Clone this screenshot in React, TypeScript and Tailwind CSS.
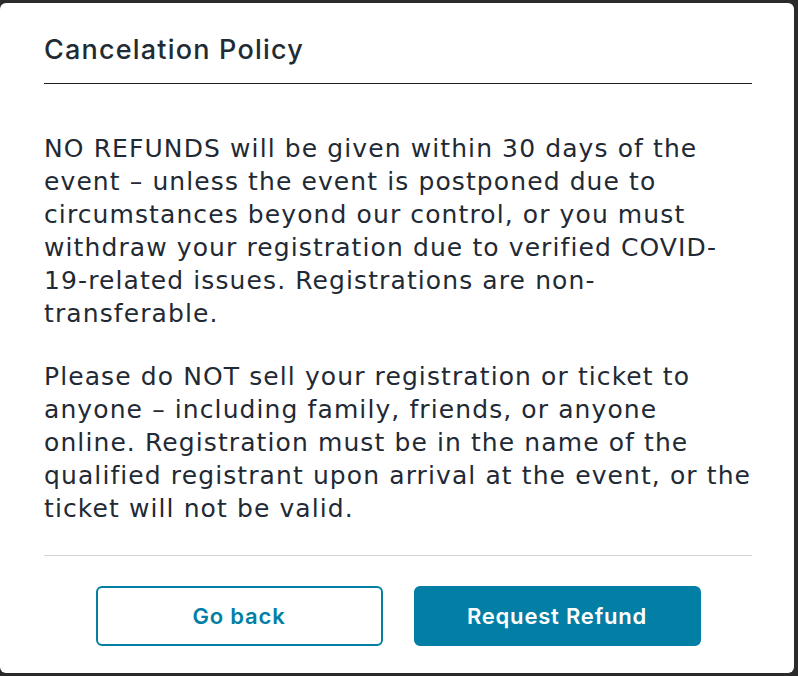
const para1 = [
  'NO REFUNDS will be given within 30 days of the',
  'event – unless the event is postponed due to',
  'circumstances beyond our control, or you must',
  'withdraw your registration due to verified COVID-',
  '19-related issues. Registrations are non-',
  'transferable.',
]

const para2 = [
  'Please do NOT sell your registration or ticket to',
  'anyone – including family, friends, or anyone',
  'online. Registration must be in the name of the',
  'qualified registrant upon arrival at the event, or the',
  'ticket will not be valid.',
]

export default function App() {
  return (
    <div className="min-h-screen bg-[#2b2b2b] pt-[3px] pr-[4px] pb-[3px]" style={{ fontFamily: 'Inter, sans-serif' }}>
      <div className="h-[670px] rounded-[6px] bg-white pl-[44px] pr-[42px] pt-[31px]">
        <div className="border-b border-[#222] pb-[18px]">
          <h2 className="text-[27px] leading-[31px] font-medium tracking-[1.2px] text-[#222b33]">Cancelation Policy</h2>
        </div>
        <div
          className="pt-[48px] text-[25px] leading-[33px] tracking-[1.1px] text-[#1f2a35]"
          style={{ fontFamily: '"DejaVu Sans", sans-serif' }}
        >
          <p className="mb-[30px]">
            {para1.map((l) => (
              <span key={l} className="block whitespace-nowrap">{l}</span>
            ))}
          </p>
          <p>
            {para2.map((l) => (
              <span key={l} className="block whitespace-nowrap">{l}</span>
            ))}
          </p>
        </div>
        <div className="mt-[30px] border-t border-[#d4d4d4]" />
        <div className="mt-[30px] flex justify-center gap-[31px]">
          <button className="h-[60px] w-[287px] rounded-[6px] border-2 border-[#037fa6] bg-white text-[22px] font-semibold tracking-[0.8px] text-[#037fa6]">
            Go back
          </button>
          <button className="h-[60px] w-[287px] rounded-[6px] border-2 border-[#037fa6] bg-[#037fa6] text-[22px] font-semibold tracking-[0.8px] text-white">
            Request Refund
          </button>
        </div>
      </div>
    </div>
  )
}
